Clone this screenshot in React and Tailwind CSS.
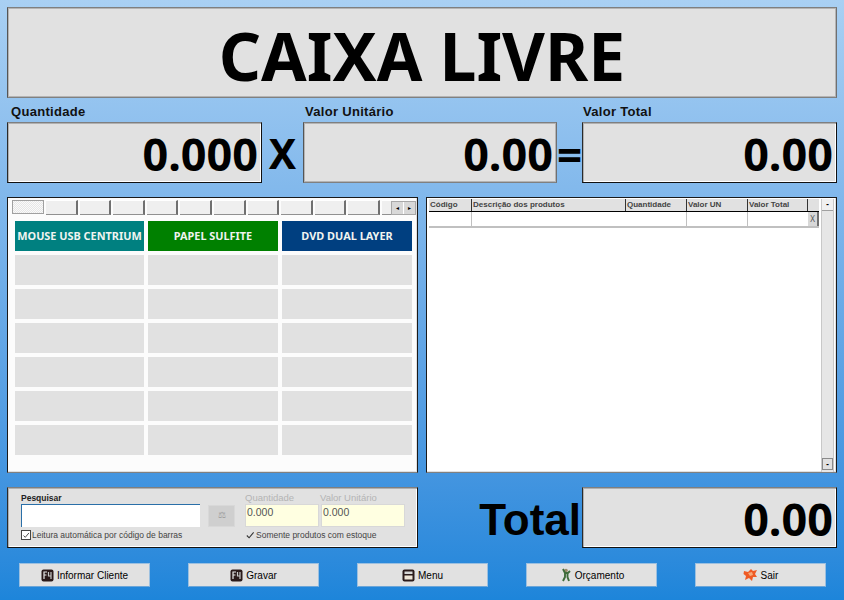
import React from 'react';

const bevel = 'border border-t-[#7f7f7f] border-l-[#2a2a2a] border-r-[#111111] border-b-[#111111] bg-[#e1e1e1] shadow-[inset_1px_1px_0_#b0b0b0,inset_-1px_-1px_0_#ffffff]';
const softBevel = 'border border-t-[#7f7f7f] border-l-[#555555] border-r-[#707070] border-b-[#808080] bg-[#e1e1e1] shadow-[inset_1px_1px_0_#b4b4b4,inset_-1px_-1px_0_#b4b4b4]';
const framed = 'border border-t-[#1a1a1a] border-l-[#1a1a1a] border-r-[#1a1a1a] border-b-[#808080] shadow-[inset_-1px_-1px_0_#e0e0e0]';
const ui = "font-['Liberation_Sans',sans-serif]";
const heavy = "font-['Noto_Sans',sans-serif] font-bold text-black";

const products = [
    { label: 'MOUSE USB CENTRIUM', color: 'bg-[#008080]' },
    { label: 'PAPEL SULFITE', color: 'bg-[#008000]' },
    { label: 'DVD DUAL LAYER', color: 'bg-[#003f80]' },
];

const columns = [
    { label: 'Código', w: 'w-[43px]' },
    { label: 'Descrição dos produtos', w: 'w-[154px]' },
    { label: 'Quantidade', w: 'w-[61px]' },
    { label: 'Valor UN', w: 'w-[61px]' },
    { label: 'Valor Total', w: 'w-[60px]' },
];

const KeyIcon = () => (
    <svg width="13" height="13" viewBox="0 0 13 13">
        <rect x="0.5" y="0.5" width="12" height="12" rx="2" fill="#2a1a1a" />
        <path d="M3 10 V3 H6 M3 6 H5.5" stroke="#e8e8e8" strokeWidth="1.2" fill="none" />
        <path d="M7.5 3 V7 H10 M10 3 V10" stroke="#c8c8c8" strokeWidth="1.2" fill="none" />
    </svg>
);

const MenuIcon = () => (
    <svg width="13" height="13" viewBox="0 0 13 13">
        <rect x="0.5" y="0.5" width="12" height="12" rx="2" fill="#2a1a1a" />
        <rect x="2.5" y="2.5" width="8" height="2.5" fill="#d8d8d8" />
        <rect x="2.5" y="6.5" width="8" height="4" fill="#efe6d8" />
    </svg>
);

const ManIcon = () => (
    <svg width="13" height="14" viewBox="0 0 13 14">
        <circle cx="7" cy="2.5" r="1.8" fill="#9a8a6a" />
        <path d="M4 1 L6 5 L9 5 L11 3 M6 5 L6 9 L4 13 M8.5 5 L8.5 9 L10 13" stroke="#3f6b3a" strokeWidth="1.9" fill="none" />
    </svg>
);

const ExitIcon = () => (
    <svg width="15" height="14" viewBox="0 0 15 14">
        <path d="M1 3 L5 4 L8 1 L10 3 L14 2 L12 6 L14 9 L10 9 L9 13 L6 10 L2 12 L3 8 L0.5 6 Z" fill="#ef5a24" />
        <path d="M5 5 L9 4 L10 7 L7 8 Z" fill="#f6a878" />
    </svg>
);

const Check = () => (
    <svg width="11" height="11" viewBox="0 0 11 11" className="block">
        <path d="M2 5.5 L4.5 8 L9.5 2" stroke="#333333" strokeWidth="1.2" fill="none" />
    </svg>
);

const Display = ({ className, value, soft }) => (
    <div className={`${soft ? softBevel : bevel} h-[61px] flex items-center justify-end pr-[3px] pt-[2px] ${className}`}>
        <span className={`${heavy} text-[45px] leading-none`}>{value}</span>
    </div>
);

const FooterButton = ({ icon, label, className }) => (
    <button className={`h-[24px] bg-[#e1e1e1] border border-[#9cc0e0] border-b-[#6aa5d8] flex items-center justify-center gap-[3px] ${ui} text-[10px] text-black ${className}`}>
        {icon}
        <span>{label}</span>
    </button>
);

const App = () => {
    return (
        <div className="w-[844px] h-[600px] overflow-hidden bg-gradient-to-b from-[#a9d0f3] to-[#1d85da] pt-[7px] px-[7px] flex flex-col">
            {/* Status */}
            <div className={`${softBevel} w-[830px] h-[91px] flex items-center justify-center pt-[5px]`}>
                <span className={`${heavy} text-[66px] leading-none`}>CAIXA LIVRE</span>
            </div>

            {/* Labels */}
            <div className={`flex h-[24px] items-end pb-[4px] ${ui} font-bold text-[13px] tracking-[0.3px] leading-none text-[#111111]`}>
                <span className="w-[298px] pl-[4px]">Quantidade</span>
                <span className="w-[278px]">Valor Unitário</span>
                <span>Valor Total</span>
            </div>

            {/* Calculo */}
            <div className="flex">
                <Display className="w-[255px]" value="0.000" />
                <div className={`w-[41px] flex items-center justify-center pt-[2px] ${heavy} text-[41px] leading-none`}>X</div>
                <Display className="w-[254px]" soft value="0.00" />
                <div className={`w-[25px] flex items-center justify-center pt-[2px] ${heavy} text-[44px] leading-none`}>=</div>
                <Display className="w-[255px]" value="0.00" />
            </div>

            {/* Main */}
            <div className="flex gap-[8px] mt-[14px] h-[276px]">
                <div className={`${framed} w-[411px] bg-[#fcfcfc] pt-[2px] pl-[4px] pr-[2px]`}>
                    <div className="flex h-[15px] items-start">
                        <div className="w-[32px] h-[14px] mr-[2px] shrink-0 border border-[#a0a0a0] bg-[repeating-conic-gradient(#e6e6e6_0_25%,#fafafa_0_50%)] bg-[length:2px_2px]" />
                        {[...Array(10)].map((_, i) => (
                            <div key={i} className="w-[31.6px] mr-[2px] h-[15px] shrink-0 bg-[#efefef] border-r-2 border-b border-r-[#707070] border-b-[#909090] border-t border-t-white" />
                        ))}
                        <div className="w-[9px] h-[15px] shrink-0 bg-[#efefef] border-b border-b-[#909090] border-t border-t-white" />
                        <div className="flex h-[14px] mt-[1px] shrink-0 border border-[#a8a8a8] bg-[#d8d8d8]">
                            <span className="w-[12px] border-r border-white flex items-center justify-center text-[6px] leading-none text-black">◂</span>
                            <span className="w-[11px] flex items-center justify-center text-[6px] leading-none text-black">▸</span>
                        </div>
                    </div>
                    <div className="grid grid-cols-[129px_130px_130px] gap-x-[4px] gap-y-[4px] mt-[6px] ml-[3px]">
                        {[...Array(21)].map((_, i) => {
                            const p = products[i];
                            return (
                                <div key={i} className={`h-[30px] flex items-center justify-center ${p ? p.color : 'bg-[#e1e1e1]'} font-['Noto_Sans',sans-serif] font-bold text-[10.9px] text-[#f0f4f0] whitespace-nowrap`}>
                                    {p && p.label}
                                </div>
                            );
                        })}
                    </div>
                </div>

                <div className={`${framed} w-[411px] bg-white pt-[1px] pl-[2px] pr-[2px] flex`}>
                    <div className="w-[391px]">
                        <div className="flex h-[13px] bg-[#e1e1e1] border-b border-black">
                            {columns.map(c => (
                                <div key={c.label} className={`${c.w} border-r border-[#333333] pl-[1px] ${ui} text-[8px] leading-[11px] font-bold text-[#444444] truncate`}>
                                    {c.label}
                                </div>
                            ))}
                            <div className="flex-1" />
                        </div>
                        <div className="flex h-[16px] border-b-2 border-[#c0c0c0]">
                            <div className="w-[43px] border-r border-[#c0c0c0]" />
                            <div className="w-[215px] border-r border-[#c0c0c0]" />
                            <div className="w-[61px] border-r border-[#c0c0c0]" />
                            <div className="flex-1 flex justify-end">
                                <div className="w-[11px] h-[14px] bg-[#d8d8d8] border-r-2 border-[#707070] text-[8px] leading-[14px] text-center text-[#555555]">X</div>
                            </div>
                        </div>
                    </div>
                    <div className="ml-[2px] w-[13px] h-full pb-[2px] flex flex-col justify-between bg-[#e6e6e6] border-x border-[#c8c8c8]">
                        <div className="h-[12px] bg-[#f0f0f0] border-b border-[#a0a0a0] text-[8px] font-bold leading-[10px] text-center text-black">-</div>
                        <div className="h-[12px] bg-[#e1e1e1] border border-[#8a8a8a] text-[8px] font-bold leading-[10px] text-center text-black">-</div>
                    </div>
                </div>
            </div>

            {/* Search + total */}
            <div className="flex mt-[14px]">
                <div className={`${bevel} w-[411px] h-[61px] pl-[13px] pr-[12px] flex flex-col ${ui}`}>
                    <div className="flex h-[16px] items-end pb-[2px] text-[9.5px] leading-none">
                        <span className="w-[224px] font-bold text-[8.5px] text-[#222222]">Pesquisar</span>
                        <span className="w-[75px] text-[#b4b4b4]">Quantidade</span>
                        <span className="text-[#b4b4b4]">Valor Unitário</span>
                    </div>
                    <div className="flex items-start">
                        <div className="w-[179px] h-[23px] bg-white border-t border-l border-[#2a6fa8]" />
                        <div className="w-[27px] h-[22px] ml-[8px] mt-[1px] bg-[#cfcfcf] border border-[#d8d8d8] flex items-center justify-center text-[9px] text-[#999999]">⚖</div>
                        <div className="w-[74px] h-[23px] ml-[10px] bg-[#ffffe1] border border-[#d8d8d8] pl-[1px] text-[10.5px] leading-[14px] text-[#555555]">0.000</div>
                        <div className="w-[84px] h-[23px] ml-[2px] bg-[#ffffe1] border border-[#d8d8d8] pl-[1px] text-[10.5px] leading-[14px] text-[#555555]">0.000</div>
                    </div>
                    <div className="flex items-center mt-[3px] text-[8.5px] leading-none text-[#444444]">
                        <span className="w-[10px] h-[10px] border border-[#444444] bg-white flex items-center justify-center overflow-hidden"><Check /></span>
                        <span className="w-[214px] pl-[1px]">Leitura automática por código de barras</span>
                        <span className="w-[10px] h-[10px] flex items-center justify-center overflow-hidden"><Check /></span>
                        <span className="pl-[1px]">Somente produtos com estoque</span>
                    </div>
                </div>
                <div className="w-[164px] flex items-center justify-end pr-[1px] pt-[4px]">
                    <span className="font-['Liberation_Sans',sans-serif] font-bold text-[44px] leading-none text-black">Total</span>
                </div>
                <Display className="w-[255px]" value="0.00" />
            </div>

            {/* Footer */}
            <div className="flex mt-[15px] ml-[12px] gap-[38px]">
                <FooterButton className="w-[131px]" icon={<KeyIcon />} label="Informar Cliente" />
                <FooterButton className="w-[131px]" icon={<KeyIcon />} label="Gravar" />
                <FooterButton className="w-[131px]" icon={<MenuIcon />} label="Menu" />
                <FooterButton className="w-[131px]" icon={<ManIcon />} label="Orçamento" />
                <FooterButton className="w-[131px]" icon={<ExitIcon />} label="Sair" />
            </div>
        </div>
    );
};

export default App;
